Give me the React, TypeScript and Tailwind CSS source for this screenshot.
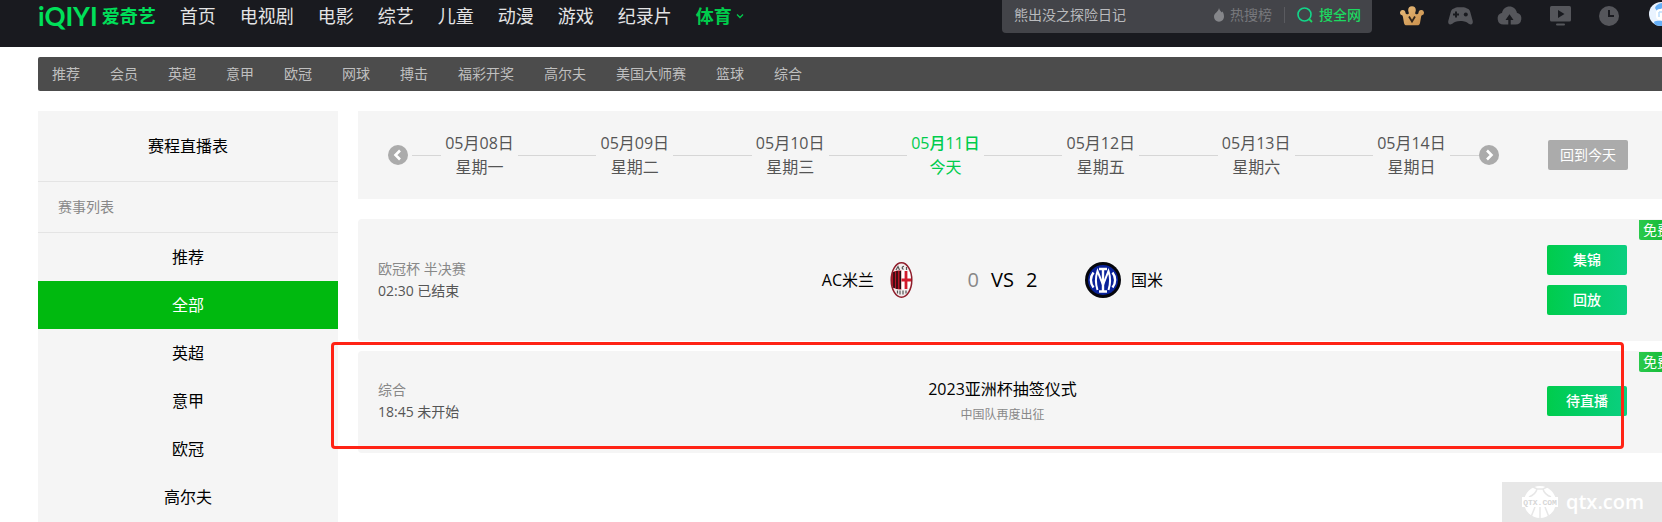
import clsx from "clsx";

const channels = ["首页", "电视剧", "电影", "综艺", "儿童", "动漫", "游戏", "纪录片"];

const sports = [
  "推荐",
  "会员",
  "英超",
  "意甲",
  "欧冠",
  "网球",
  "搏击",
  "福彩开奖",
  "高尔夫",
  "美国大师赛",
  "篮球",
  "综合",
];

const leagues = ["推荐", "全部", "英超", "意甲", "欧冠", "高尔夫"];

const days = [
  { date: "05月08日", label: "星期一" },
  { date: "05月09日", label: "星期二" },
  { date: "05月10日", label: "星期三" },
  { date: "05月11日", label: "今天", today: true },
  { date: "05月12日", label: "星期五" },
  { date: "05月13日", label: "星期六" },
  { date: "05月14日", label: "星期日" },
];

function CrownIcon() {
  return (
    <svg width="24" height="20" viewBox="0 0 24 20">
      <defs>
        <linearGradient id="gold" x1="0" y1="0" x2="1" y2="1">
          <stop offset="0" stopColor="#e9bd7c" />
          <stop offset="1" stopColor="#c88d48" />
        </linearGradient>
      </defs>
      <path
        fill="url(#gold)"
        d="M8.2 4a3.8 3.8 0 0 1 7.6 0c0 1.6-.6 2.2-.6 3.2 0 1.2 2.600 1.300 3.200 0 .3-2 1.100-3.200 2.800-3.200a2.700 2.700 0 0 1 .8 5.300c-.7.3-.8 1-1 2l-1 5.700c-.3 1.600-1.200 2.300-2.700 2.300H6.700c-1.500 0-2.400-.7-2.700-2.300l-1-5.700c-.2-1-.3-1.700-1-2A2.700 2.700 0 0 1 2.800 4c1.700 0 2.500 1.200 2.800 3.200.6 1.300 3.200 1.200 3.200 0 0-1-.6-1.600-.6-3.200z"
      />
      <path d="M9 10.500l3 5 3-5" fill="none" stroke="#33261a" strokeWidth="1.800" />
    </svg>
  );
}

function GamepadIcon() {
  return (
    <svg width="25" height="18" viewBox="0 0 25 18">
      <path
        fill="#55565b"
        d="M6.500 1.200C7.700.4 8.800.3 10 .3h5c1.200 0 2.300.1 3.500.9 1.800.4 2.900 1.300 3.600 3.300l2.500 9c.9 3.800-1.300 5-3.900 3.200-2.300-1.700-3.900-2.700-8.200-2.700s-5.900 1-8.200 2.700C1.700 18.500-.5 17.300.4 13.500l2.500-9c.7-2 1.800-2.900 3.600-3.300z"
      />
      <path d="M8 4.500v6M5 7.500h6" stroke="#191a1f" strokeWidth="2" />
      <circle cx="17.800" cy="7.500" r="2" fill="#191a1f" />
    </svg>
  );
}

function CloudIcon() {
  return (
    <svg width="25" height="19" viewBox="0 0 25 19">
      <path
        fill="#55565b"
        d="M6.500 18.500a6 6 0 0 1-1.400-11.800C5.800 3 8.800.5 12.500.5s6.700 2.500 7.400 6.200a6 6 0 0 1-1.400 11.800z"
      />
      <path fill="#191a1f" d="M12.500 8.200l4 5.800h-2.800v5h-2.400v-5H8.500z" />
    </svg>
  );
}

function ScreenIcon() {
  return (
    <svg width="21" height="20" viewBox="0 0 21 20">
      <rect width="21" height="15.500" rx="1.500" fill="#55565b" />
      <path fill="#191a1f" d="M8 4l6.500 4L8 12z" />
      <rect x="6" y="17.500" width="9" height="2" rx="1" fill="#55565b" />
    </svg>
  );
}

function ClockIcon() {
  return (
    <svg width="20" height="20" viewBox="0 0 20 20">
      <circle cx="10" cy="10" r="10" fill="#55565b" />
      <path d="M10 4v6h5" fill="none" stroke="#191a1f" strokeWidth="2" />
    </svg>
  );
}

function Avatar() {
  return (
    <svg width="24" height="24" viewBox="0 0 24 24">
      <defs>
        <clipPath id="face">
          <circle cx="12" cy="12" r="12" />
        </clipPath>
      </defs>
      <g clipPath="url(#face)">
        <rect width="24" height="24" fill="#e9f3ff" />
        <path fill="#66b0f8" d="M6 6c1-3 4-5 9-5h9v7c-8-4-12-2-16 1zM5 20c3-2 8-1 19 0v4H6z" />
        <rect x="7" y="7" width="17" height="11" rx="4" fill="#fff" />
        <path d="M10 10v5M14 10v5M10 10h4" stroke="#b9dbfb" strokeWidth="1.500" />
      </g>
    </svg>
  );
}

function MilanCrest() {
  return (
    <svg width="36" height="36" viewBox="0 0 36 36">
      <ellipse cx="17.500" cy="18" rx="10.300" ry="17.200" fill="#f3eeee" />
      <path d="M12 8l2-3.500L15.500 8M20 4.500c-2-.5-2.500 2.500-.5 2.800M22.500 5v3" fill="none" stroke="#555" strokeWidth="1.200" />
      <path d="M8 11c2-2 4-2.500 9.500-2.500v19c-5.500 0-7.500-1-9.500-3.500-1-4-1-9 0-13z" fill="#b81427" />
      <path d="M10 10v16M13 9v18M16.300 9v18" stroke="#1b0d10" strokeWidth="1.500" />
      <path d="M17.500 8.500c5 0 7 .5 9.500 2.500 1 4 1 9 0 13-2 2.500-4.500 3.500-9.500 3.500z" fill="#fff" />
      <path d="M22 9v18M17.500 18H28" stroke="#d11a2b" strokeWidth="2.800" />
      <path d="M13.500 28.500v3M16 28.500v4M19 28.500v4M22 28.500v3" stroke="#555" strokeWidth="1.200" />
      <ellipse cx="17.500" cy="18" rx="10.300" ry="17.200" fill="none" stroke="#8f1d2b" strokeWidth="1.500" />
    </svg>
  );
}

function InterCrest() {
  return (
    <svg width="36" height="36" viewBox="0 0 36 36">
      <circle cx="18" cy="18" r="18" fill="#05060c" />
      <circle cx="18" cy="18" r="15" fill="#0a2299" />
      <g fill="none" stroke="#fff" strokeWidth="2.400">
        <path d="M18 7v22M14 7h8M14 29.500h8" />
        <path d="M12.500 28c-2-6-2-13 0-19l5.500 14 5.500-14c2 6 2 13 0 19" strokeWidth="2" />
        <path d="M8.500 10.500c-3.500 4.500-3.500 10.500 0 15M27.500 10.500c3.500 4.500 3.500 10.500 0 15" />
      </g>
    </svg>
  );
}

function ArrowButton({ dir }: { dir: "left" | "right" }) {
  return (
    <button aria-label={dir === "left" ? "前一周" : "后一周"} className="size-5 shrink-0">
      <svg width="20" height="20" viewBox="0 0 20 20">
        <circle cx="10" cy="10" r="10" fill="#ababab" />
        <path
          d={dir === "left" ? "M12 5.500L7.500 10l4.500 4.500" : "M8 5.500l4.500 4.500L8 14.500"}
          fill="none"
          stroke="#fff"
          strokeWidth="2.600"
        />
      </svg>
    </button>
  );
}

function ActionButton({ children }: { children: string }) {
  return (
    <button className="h-[30px] w-20 rounded-xs bg-linear-to-r from-[#00cc4c] to-[#0bcf80] text-sm font-medium text-white">
      {children}
    </button>
  );
}

function FreeBadge() {
  return (
    <span className="absolute top-px -right-3 h-5 w-[35px] rounded-bl-xs bg-linear-to-r from-[#29c94c] to-[#08b62e] pl-1 text-sm leading-5 whitespace-nowrap text-white">
      免费
    </span>
  );
}

function Header() {
  return (
    <header className="flex h-[47px] items-start bg-[#191a1f] pl-[38px]">
      <a href="#" className="flex h-[31px] shrink-0 items-center gap-1 font-bold text-[#00e05a]">
        <span className="font-['Lato'] text-[26px] leading-6">iQIYI</span>
        <span className="text-lg leading-6">爱奇艺</span>
      </a>
      <nav className="ml-6 flex h-[31px] shrink-0 items-center gap-6 text-lg leading-6 text-[#e4e4e5]">
        {channels.map((name) => (
          <a key={name} href="#">
            {name}
          </a>
        ))}
        <a href="#" className="flex items-center gap-1 font-bold text-[#00cc4c]">
          体育
          <svg width="8" height="6" viewBox="0 0 8 6">
            <path d="M1 1.500l3 3 3-3" fill="none" stroke="#00cc4c" strokeWidth="1.300" />
          </svg>
        </a>
      </nav>
      <div className="ml-auto flex h-[33px] w-[370px] shrink-0 items-center rounded-b bg-[#434449] pr-[11px] pb-1 pl-3 text-sm">
        <input
          aria-label="搜索"
          defaultValue="熊出没之探险日记"
          className="min-w-0 flex-1 bg-transparent text-[#b9babd] outline-none"
        />
        <a href="#" className="flex items-center gap-1.5 text-[#77787c]">
          <svg width="10" height="14" viewBox="0 0 10 14">
            <path
              fill="#85868a"
              d="M5 0c.5 2.500 2 3.500 3 4.500.3-.4.400-.8.400-1.200C9.500 5 10 6.700 10 8.500c0 3-2.200 5.200-5 5.200S0 11.500 0 8.500C0 5 4.500 4 5 0z"
            />
          </svg>
          热搜榜
        </a>
        <span className="mx-3 h-4 w-px bg-[#5a5b60]" />
        <button className="flex items-center gap-1.5 font-medium text-[#1cd860]">
          <svg width="16" height="16" viewBox="0 0 16 16">
            <circle cx="7.500" cy="7.500" r="6.500" fill="none" stroke="#12d68a" strokeWidth="1.600" />
            <path d="M12 12l3 3" stroke="#1cd860" strokeWidth="1.800" />
          </svg>
          搜全网
        </button>
      </div>
      <div className="-mr-[11px] ml-7 flex h-[31px] shrink-0 items-center gap-6">
        <a href="#" aria-label="会员"><CrownIcon /></a>
        <a href="#" aria-label="游戏中心"><GamepadIcon /></a>
        <a href="#" aria-label="上传"><CloudIcon /></a>
        <a href="#" aria-label="客户端" className="ml-1"><ScreenIcon /></a>
        <a href="#" aria-label="播放记录" className="ml-1"><ClockIcon /></a>
        <a href="#" aria-label="个人中心" className="mb-1 ml-1.5"><Avatar /></a>
      </div>
    </header>
  );
}

function Sidebar() {
  return (
    <aside className="w-[300px] shrink-0 bg-[#f5f5f5]">
      <h2 className="border-b border-[#e4e4e4] text-center text-base leading-[70px] text-black">赛程直播表</h2>
      <h3 className="border-b border-[#e4e4e4] pl-5 text-sm leading-[50px] text-[#888]">赛事列表</h3>
      <ul>
        {leagues.map((name) => (
          <li key={name}>
            <a
              href="#"
              className={clsx(
                "block text-center text-base leading-[48px]",
                name === "全部" ? "bg-[#00b90f] text-white" : "text-black"
              )}
            >
              {name}
            </a>
          </li>
        ))}
      </ul>
    </aside>
  );
}

function DateStrip() {
  return (
    <div className="flex h-[88px] items-center bg-[#f5f5f5] pr-[34px] pl-[30px]">
      <ArrowButton dir="left" />
      <div className="ml-1 flex flex-1 items-center">
        <span className="h-px w-[29px] bg-[#d6d6d6]" />
        {days.map((day, i) => (
          <div key={day.date} className={clsx("flex items-center", i > 0 && "flex-1")}>
            {i > 0 && <span className="h-px flex-1 bg-[#d6d6d6]" />}
            <button
              className={clsx(
                "w-[77px] text-center text-base leading-6 whitespace-nowrap",
                day.today ? "text-[#00cc4c]" : "text-[#555]"
              )}
            >
              <span className={clsx("block", day.today && "font-medium")}>{day.date}</span>
              <span className="block">{day.label}</span>
            </button>
          </div>
        ))}
        <span className="h-px w-[29px] bg-[#d6d6d6]" />
      </div>
      <ArrowButton dir="right" />
      <button className="ml-[49px] h-[30px] w-20 rounded-xs bg-[#ababab] text-sm text-white">回到今天</button>
    </div>
  );
}

function MatchInfo({ league, time, status }: { league: string; time: string; status: string }) {
  return (
    <div className="w-[200px] text-sm leading-[22px]">
      <p className="text-[#888]">{league}</p>
      <p className="text-[#555]">
        {time} {status}
      </p>
    </div>
  );
}

export default function App() {
  return (
    <div className="relative flex min-h-screen flex-col overflow-hidden bg-white font-['Open_Sans','Noto_Sans_CJK_SC',sans-serif]">
      <Header />
      <nav className="mt-2.5 ml-[38px] flex h-[34px] items-center gap-[30px] rounded-l-xs bg-[#4c4c4c] pl-3.5 text-sm text-[#bfbfbf]">
        {sports.map((name) => (
          <a key={name} href="#">
            {name}
          </a>
        ))}
      </nav>

      <div className="mt-5 flex flex-1 gap-5 pl-[38px]">
        <Sidebar />
        <main className="min-w-0 flex-1">
          <DateStrip />

          <section className="relative mt-5 flex h-[122px] items-center rounded-l bg-[#f5f5f5] pr-[35px] pl-5">
            <MatchInfo league="欧冠杯 半决赛" time="02:30" status="已结束" />
            <div className="flex flex-1 items-center text-base text-black">
              <div className="flex flex-1 items-center justify-end gap-2.5">
                AC米兰
                <MilanCrest />
              </div>
              <div className="flex w-[165px] items-center justify-center gap-3 text-xl">
                <span className="text-[#888]">0</span>
                <span>VS</span>
                <span>2</span>
              </div>
              <div className="flex flex-1 items-center gap-2.5">
                <InterCrest />
                国米
              </div>
            </div>
            <div className="flex w-[200px] flex-col items-end gap-2.5">
              <ActionButton>集锦</ActionButton>
              <ActionButton>回放</ActionButton>
            </div>
            <FreeBadge />
          </section>

          <section className="relative mt-2.5 flex h-[102px] items-center rounded-l bg-[#f5f5f5] pr-[35px] pb-0.5 pl-5">
            <MatchInfo league="综合" time="18:45" status="未开始" />
            <div className="flex-1 text-center">
              <p className="text-base leading-7 text-black">2023亚洲杯抽签仪式</p>
              <p className="text-xs leading-6 text-[#888]">中国队再度出征</p>
            </div>
            <div className="flex w-[200px] justify-end">
              <ActionButton>待直播</ActionButton>
            </div>
            <FreeBadge />
            {/* highlight frame */}
            <div className="pointer-events-none absolute -top-[9px] right-[38px] bottom-1 -left-[27px] rounded-sm border-3 border-[#ff2315]" />
          </section>
        </main>
      </div>

      <div className="absolute right-0 bottom-0 flex h-10 w-40 items-center gap-2 bg-[#e7e7e7] pl-5 text-white">
        <svg width="36" height="34" viewBox="0 0 36 34">
          <circle cx="18" cy="17" r="16" fill="#fff" />
          <path
            d="M11 2l4 2h6l4-2M15 4c-1 4-3 6-8 8M21 4c1 4 3 6 8 8M18 22v12M13 22l-4 10M23 22l4 10"
            fill="none"
            stroke="#e7e7e7"
            strokeWidth="1.500"
          />
          <rect y="12" width="36" height="10" fill="#fff" />
          <text x="18" y="20" textAnchor="middle" fontSize="8" fontWeight="bold" fontFamily="Liberation Mono" fill="#d6d6d6">
            QTX.COM
          </text>
        </svg>
        <span className="text-xl leading-8 font-semibold">qtx.com</span>
      </div>
    </div>
  );
}
